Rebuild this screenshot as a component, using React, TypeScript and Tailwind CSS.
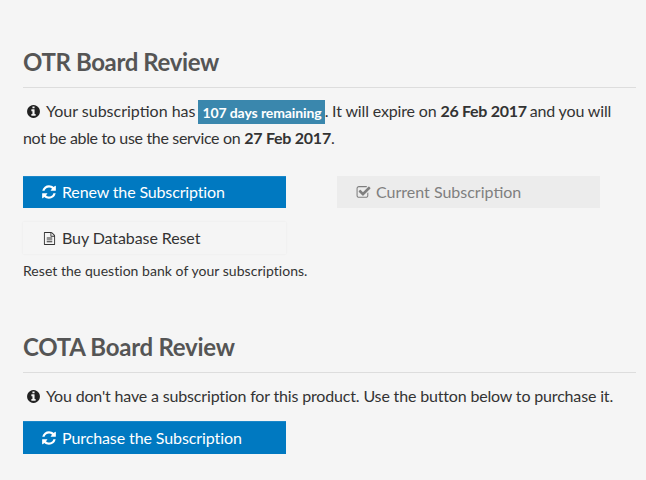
const REFRESH =
  'M1639 1056q0 5-1 7-64 268-268 434.5t-478 166.5q-146 0-282.5-55t-243.5-157l-129 129q-19 19-45 19t-45-19-19-45v-448q0-26 19-45t45-19h448q26 0 45 19t19 45-19 45l-137 137q71 66 161 102t187 36q134 0 250-65t186-179q11-17 53-117 8-23 30-23h192q13 0 22.5 9.5t9.5 22.5zm25-800v448q0 26-19 45t-45 19h-448q-26 0-45-19t-19-45 19-45l138-138q-148-137-349-137-134 0-250 65t-186 179q-11 17-53 117-8 23-30 23h-199q-13 0-22.5-9.5t-9.5-22.5v-7q65-268 270-434.5t480-166.5q146 0 284 55.5t245 156.5l130-129q19-19 45-19t45 19 19 45z'
const INFO =
  'M1152 1376v-160q0-14-9-23t-23-9h-96v-512q0-14-9-23t-23-9h-320q-14 0-23 9t-9 23v160q0 14 9 23t23 9h96v320h-96q-14 0-23 9t-9 23v160q0 14 9 23t23 9h448q14 0 23-9t9-23zm-128-896v-160q0-14-9-23t-23-9h-192q-14 0-23 9t-9 23v160q0 14 9 23t23 9h192q14 0 23-9t9-23zm640 416q0 209-103 385.5t-279.5 279.5-385.5 103-385.5-103-279.5-279.5-103-385.5 103-385.5 279.5-279.5 385.5-103 385.5 103 279.5 279.5 103 385.5z'
const CHECK =
  'M1472 930v318q0 119-84.5 203.5t-203.5 84.5h-832q-119 0-203.5-84.5t-84.5-203.5v-832q0-119 84.5-203.5t203.5-84.5h832q63 0 117 25 15 7 18 23 3 17-9 29l-49 49q-10 10-23 10-3 0-9-2-23-6-45-6h-832q-66 0-113 47t-47 113v832q0 66 47 113t113 47h832q66 0 113-47t47-113v-254q0-13 9-22l64-64q10-10 23-10 6 0 12 3 20 8 20 29zm231-489l-814 814q-24 24-57 24t-57-24l-430-430q-24-24-24-57t24-57l110-110q24-24 57-24t57 24l263 263 647-647q24-24 57-24t57 24l110 110q24 24 24 57t-24 57z'
const FILE =
  'M1596 380q28 28 48 76t20 88v1152q0 40-28 68t-68 28h-1344q-40 0-68-28t-28-68v-1600q0-40 28-68t68-28h896q40 0 88 20t76 48zm-444-244v376h376q-10-29-22-41l-313-313q-12-12-41-22zm384 1528v-1024h-416q-40 0-68-28t-28-68v-416h-768v1536h1280zm-1024-864q0-14 9-23t23-9h704q14 0 23 9t9 23v64q0 14-9 23t-23 9h-704q-14 0-23-9t-9-23v-64zm736 224q14 0 23 9t9 23v64q0 14-9 23t-23 9h-704q-14 0-23-9t-9-23v-64q0-14 9-23t23-9h704zm0 256q14 0 23 9t9 23v64q0 14-9 23t-23 9h-704q-14 0-23-9t-9-23v-64q0-14 9-23t23-9h704z'

function Icon({ d, className }: { d: string; className: string }) {
  return (
    <svg viewBox="0 0 1792 1792" fill="currentColor" className={className}>
      <path d={d} />
    </svg>
  )
}

function Heading({ title, className }: { title: string; className: string }) {
  return (
    <h2 className={`text-[24px] leading-[30px] font-bold text-[#555555] pb-[10px] border-b border-[#dddddd] ${className}`}>
      {title}
    </h2>
  )
}

function InfoIcon() {
  return <Icon d={INFO} className="inline-block w-[15px] h-[15px] ml-[3px] mr-[5px] mb-[3px] text-[#222222]" />
}

export default function App() {
  return (
    <div className="h-[480px] overflow-hidden bg-[#f5f5f5] px-[23px] pt-[47px] text-[16px] text-[#333333] font-['Lato','Noto_Sans',sans-serif]">
      <section className="w-[613px]">
        <Heading title="OTR Board Review" className="tracking-[-0.38px]" />
        <p className="mt-[10px] leading-[26px] tracking-[-0.2px]">
          <InfoIcon />
          <span className="tracking-normal">Your subscription has</span>{' '}
          <span className="-ml-[1px] bg-[#3a87ad] text-white text-[14px] tracking-[-0.1px] font-bold pl-[4px] pr-[3px] py-[3.5px]">107 days remaining</span>
          . <span className="tracking-[-0.15px]">It will expire on</span> <b className="tracking-[-0.28px]">26 Feb 2017</b>{' '}
          <span className="-ml-[1px] tracking-[-0.15px]">and you will</span>
          <br />
          <span className="tracking-[-0.33px]">not be able to use the service on</span> <b className="tracking-[-0.25px]">27 Feb 2017</b>.
        </p>
        <div className="mt-[25px] grid grid-cols-[263px_263px] gap-x-[51px] gap-y-[14px]">
          <button className="h-[32px] flex items-center pl-[18px] pb-[2px] gap-[5px] bg-[#0079c1] border-t border-[#1b87c9] text-white tracking-[-0.14px]">
            <Icon d={REFRESH} className="w-[16px] h-[16px]" />
            Renew the Subscription
          </button>
          <button className="h-[32px] flex items-center pl-[19px] gap-[5px] bg-[#ececec] text-[#7f7f7f]">
            <Icon d={CHECK} className="w-[15px] h-[15px]" />
            Current Subscription
          </button>
          <button className="h-[32px] flex items-center pl-[20px] gap-[6px] bg-[#f5f5f5] text-[#333333] tracking-[-0.09px] shadow-[0_0_2px_rgba(0,0,0,0.06)]">
            <Icon d={FILE} className="w-[13px] h-[13px]" />
            Buy Database Reset
          </button>
        </div>
        <p className="mt-[8px] text-[14px] leading-[18px] tracking-[0.04px]">Reset the question bank of your subscriptions.</p>
      </section>
      <section className="w-[613px] mt-[52px]">
        <Heading title="COTA Board Review" className="tracking-[-0.27px]" />
        <p className="mt-[10px] leading-[26px] tracking-[-0.165px]">
          <InfoIcon />
          You don't have a subscription for this product. Use the button below to purchase it.
        </p>
        <button className="mt-[12px] w-[263px] h-[33px] flex items-center pl-[18px] gap-[5px] bg-[#0079c1] border-t border-[#1b87c9] text-white tracking-[-0.1px]">
          <Icon d={REFRESH} className="w-[16px] h-[16px]" />
          Purchase the Subscription
        </button>
      </section>
    </div>
  )
}
